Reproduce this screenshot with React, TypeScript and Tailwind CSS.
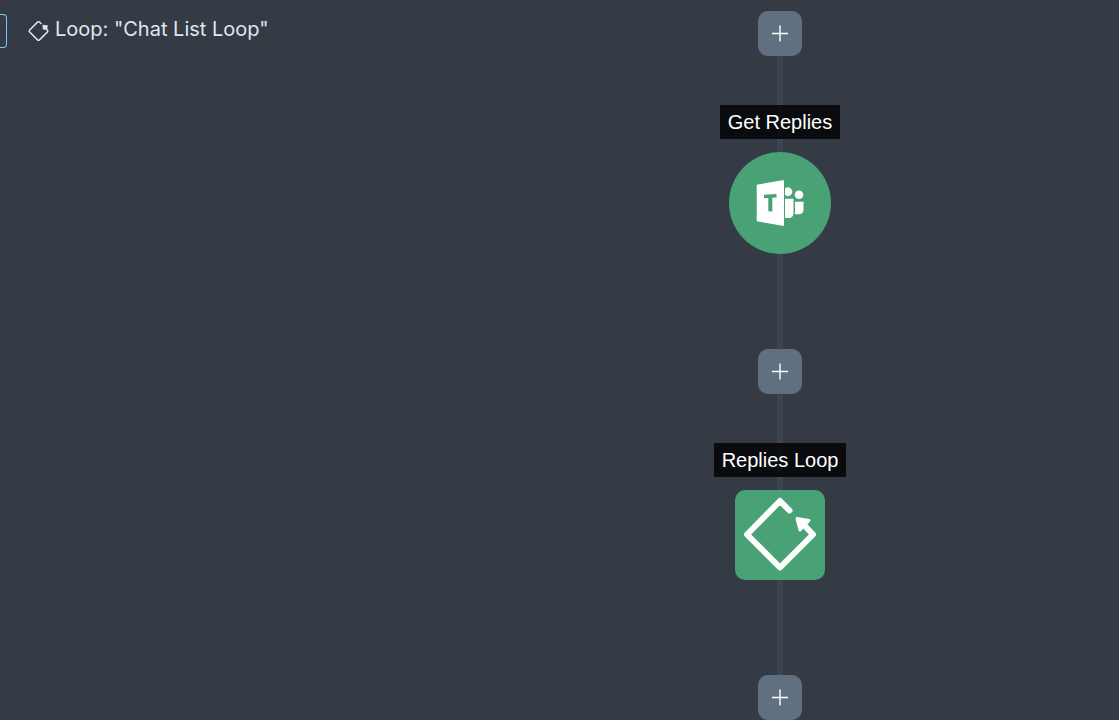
import type { ReactNode } from "react";

function LoopIcon() {
  return (
    <svg viewBox="0 0 90 90" className="size-full" fill="none" aria-hidden="true">
      <path
        d="M54.5 20.5 45 11 12 44.5 45 77.5 78 44.5 68 34"
        stroke="currentColor"
        strokeWidth="6"
        strokeLinecap="round"
        strokeLinejoin="round"
      />
      <path
        d="M62 28.500 74 30.500 65 40Z"
        fill="currentColor"
        stroke="currentColor"
        strokeWidth="3"
        strokeLinejoin="round"
      />
    </svg>
  );
}

function SmallLoopIcon() {
  return (
    <svg viewBox="0 0 22 22" className="mt-1 size-[22px]" fill="none" aria-hidden="true">
      <path
        d="M13 3.500 11.500 2.100Q10.500 1.300 9.500 2.100L1.700 10Q0.900 11 1.700 12L9.500 19.900Q10.500 20.700 11.500 19.900L19.400 12Q20.200 11 19.400 10L18 8.500"
        stroke="currentColor"
        strokeWidth="1.500"
        strokeLinecap="round"
      />
      <path d="M14.500 4.700 20 5.500 18.700 9.800 14.900 9.600Z" fill="currentColor" />
    </svg>
  );
}

function TeamsIcon() {
  return (
    <svg viewBox="0 0 48 48" className="size-12" fill="currentColor" aria-hidden="true">
      <path
        fillRule="evenodd"
        d="M.7 5.700 28 1v46L.7 42.300ZM8 15.700v3.500l4.300-.2v13.200l4 .3V18.800l4.200-.2v-3.600Z"
      />
      <path d="M29 9.800a4.200 4.200 0 1 1 0 6Z" />
      <circle cx="43" cy="15.700" r="4.300" />
      <path d="M29 19.700h8.500v14.800a4.500 4.500 0 0 1-4.500 4.500h-4Z" />
      <path d="M39 22.700h8.500v8a4.500 4.500 0 0 1-4.500 4.500h-4Z" />
    </svg>
  );
}

function AddButton() {
  return (
    <button
      type="button"
      aria-label="Add step"
      className="relative flex h-[45px] w-11 items-center justify-center rounded-[10px] bg-[#607080] text-white"
    >
      <svg viewBox="0 0 16 17" className="h-[17px] w-4" fill="none" stroke="currentColor" aria-hidden="true">
        <path d="M8 0.500v16M0 8.500h16" strokeWidth="1.400" />
      </svg>
    </button>
  );
}

function Step({ name, children }: { name: string; children: ReactNode }) {
  return (
    <li className="relative flex flex-col items-center gap-[13px] pt-[49px] pb-[95px]">
      <span className="flex h-[34px] items-center bg-black/80 px-2 text-xl leading-8 whitespace-nowrap text-white">
        {name}
      </span>
      {children}
    </li>
  );
}

export default function App() {
  return (
    <div className="flex min-h-screen bg-[#343b45] font-['Liberation_Sans',sans-serif]">
      <header className="w-[441px] shrink-0">
        <nav
          aria-label="Breadcrumb"
          className="flex items-start gap-[21px] pt-[14px] font-['Inter',sans-serif] text-[#dfe6ee]"
        >
          <button
            type="button"
            aria-label="Back"
            className="h-[34px] w-[7px] rounded-r-[4px] border border-l-0 border-[#7cc8f7]"
          />
          <a href="#loop" className="flex items-center gap-[5px] text-xl leading-[30px]">
            <SmallLoopIcon />
            <span>Loop: "Chat List Loop"</span>
          </a>
        </nav>
      </header>

      <main className="flex flex-1 justify-center pt-[11px]">
        <div className="relative flex flex-col items-center">
          <div className="absolute inset-y-0 left-1/2 w-[6px] -translate-x-1/2 bg-[#3b4450]" />
          <AddButton />
          <ol className="flex flex-col items-center">
            <Step name="Get Replies">
              <button
                type="button"
                aria-label="Open Get Replies"
                className="flex size-[102px] items-center justify-center rounded-full bg-[#48a276] text-white"
              >
                <TeamsIcon />
              </button>
            </Step>
            <li>
              <AddButton />
            </li>
            <Step name="Replies Loop">
              <button
                type="button"
                aria-label="Open Replies Loop"
                className="size-[90px] rounded-[10px] bg-[#48a276] text-white"
              >
                <LoopIcon />
              </button>
            </Step>
          </ol>
          <AddButton />
        </div>
      </main>
    </div>
  );
}
